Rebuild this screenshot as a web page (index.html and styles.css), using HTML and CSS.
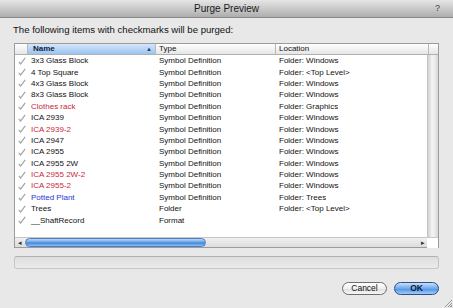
FILE: index.html
```html
<!DOCTYPE html>
<html>
<head>
<meta charset="utf-8">
<link rel="stylesheet" href="styles.css">
</head>
<body>
<div class="window">
  <div class="titlebar">
    <span class="title">Purge Preview</span>
    <span class="help">?</span>
  </div>
  <div class="content">
    <div class="prompt">The following items with checkmarks will be purged:</div>
    <div class="list">
      <div class="header">
        <div class="hcell hcheck"></div>
        <div class="hcell hname">Name<span class="sort">▲</span></div>
        <div class="hcell htype">Type</div>
        <div class="hcell hloc">Location</div>
        <div class="hcell hcorner"></div>
      </div>
      <div class="body">
        <div class="rows">
          <div class="row"><span class="chk"><svg viewBox="0 0 8 8" width="8" height="8"><path d="M0.8 5.2 L2.6 7 L7.2 0.8" fill="none" stroke="#a4a4a4" stroke-width="1.2"/><path d="M1.6 4.6 L2.6 5.8" stroke="#d0d0d0" stroke-width="0.8"/></svg></span><span class="c name">3x3 Glass Block</span><span class="c type">Symbol Definition</span><span class="c loc">Folder: Windows</span></div>
          <div class="row"><span class="chk"><svg viewBox="0 0 8 8" width="8" height="8"><path d="M0.8 5.2 L2.6 7 L7.2 0.8" fill="none" stroke="#a4a4a4" stroke-width="1.2"/><path d="M1.6 4.6 L2.6 5.8" stroke="#d0d0d0" stroke-width="0.8"/></svg></span><span class="c name">4 Top Square</span><span class="c type">Symbol Definition</span><span class="c loc">Folder: &lt;Top Level&gt;</span></div>
          <div class="row"><span class="chk"><svg viewBox="0 0 8 8" width="8" height="8"><path d="M0.8 5.2 L2.6 7 L7.2 0.8" fill="none" stroke="#a4a4a4" stroke-width="1.2"/><path d="M1.6 4.6 L2.6 5.8" stroke="#d0d0d0" stroke-width="0.8"/></svg></span><span class="c name">4x3 Glass Block</span><span class="c type">Symbol Definition</span><span class="c loc">Folder: Windows</span></div>
          <div class="row"><span class="chk"><svg viewBox="0 0 8 8" width="8" height="8"><path d="M0.8 5.2 L2.6 7 L7.2 0.8" fill="none" stroke="#a4a4a4" stroke-width="1.2"/><path d="M1.6 4.6 L2.6 5.8" stroke="#d0d0d0" stroke-width="0.8"/></svg></span><span class="c name">8x3 Glass Block</span><span class="c type">Symbol Definition</span><span class="c loc">Folder: Windows</span></div>
          <div class="row"><span class="chk"><svg viewBox="0 0 8 8" width="8" height="8"><path d="M0.8 5.2 L2.6 7 L7.2 0.8" fill="none" stroke="#a4a4a4" stroke-width="1.2"/><path d="M1.6 4.6 L2.6 5.8" stroke="#d0d0d0" stroke-width="0.8"/></svg></span><span class="c name red">Clothes rack</span><span class="c type">Symbol Definition</span><span class="c loc">Folder: Graphics</span></div>
          <div class="row"><span class="chk"><svg viewBox="0 0 8 8" width="8" height="8"><path d="M0.8 5.2 L2.6 7 L7.2 0.8" fill="none" stroke="#a4a4a4" stroke-width="1.2"/><path d="M1.6 4.6 L2.6 5.8" stroke="#d0d0d0" stroke-width="0.8"/></svg></span><span class="c name">ICA 2939</span><span class="c type">Symbol Definition</span><span class="c loc">Folder: Windows</span></div>
          <div class="row"><span class="chk"><svg viewBox="0 0 8 8" width="8" height="8"><path d="M0.8 5.2 L2.6 7 L7.2 0.8" fill="none" stroke="#a4a4a4" stroke-width="1.2"/><path d="M1.6 4.6 L2.6 5.8" stroke="#d0d0d0" stroke-width="0.8"/></svg></span><span class="c name red">ICA 2939-2</span><span class="c type">Symbol Definition</span><span class="c loc">Folder: Windows</span></div>
          <div class="row"><span class="chk"><svg viewBox="0 0 8 8" width="8" height="8"><path d="M0.8 5.2 L2.6 7 L7.2 0.8" fill="none" stroke="#a4a4a4" stroke-width="1.2"/><path d="M1.6 4.6 L2.6 5.8" stroke="#d0d0d0" stroke-width="0.8"/></svg></span><span class="c name">ICA 2947</span><span class="c type">Symbol Definition</span><span class="c loc">Folder: Windows</span></div>
          <div class="row"><span class="chk"><svg viewBox="0 0 8 8" width="8" height="8"><path d="M0.8 5.2 L2.6 7 L7.2 0.8" fill="none" stroke="#a4a4a4" stroke-width="1.2"/><path d="M1.6 4.6 L2.6 5.8" stroke="#d0d0d0" stroke-width="0.8"/></svg></span><span class="c name">ICA 2955</span><span class="c type">Symbol Definition</span><span class="c loc">Folder: Windows</span></div>
          <div class="row"><span class="chk"><svg viewBox="0 0 8 8" width="8" height="8"><path d="M0.8 5.2 L2.6 7 L7.2 0.8" fill="none" stroke="#a4a4a4" stroke-width="1.2"/><path d="M1.6 4.6 L2.6 5.8" stroke="#d0d0d0" stroke-width="0.8"/></svg></span><span class="c name">ICA 2955 2W</span><span class="c type">Symbol Definition</span><span class="c loc">Folder: Windows</span></div>
          <div class="row"><span class="chk"><svg viewBox="0 0 8 8" width="8" height="8"><path d="M0.8 5.2 L2.6 7 L7.2 0.8" fill="none" stroke="#a4a4a4" stroke-width="1.2"/><path d="M1.6 4.6 L2.6 5.8" stroke="#d0d0d0" stroke-width="0.8"/></svg></span><span class="c name red">ICA 2955 2W-2</span><span class="c type">Symbol Definition</span><span class="c loc">Folder: Windows</span></div>
          <div class="row"><span class="chk"><svg viewBox="0 0 8 8" width="8" height="8"><path d="M0.8 5.2 L2.6 7 L7.2 0.8" fill="none" stroke="#a4a4a4" stroke-width="1.2"/><path d="M1.6 4.6 L2.6 5.8" stroke="#d0d0d0" stroke-width="0.8"/></svg></span><span class="c name red">ICA 2955-2</span><span class="c type">Symbol Definition</span><span class="c loc">Folder: Windows</span></div>
          <div class="row"><span class="chk"><svg viewBox="0 0 8 8" width="8" height="8"><path d="M0.8 5.2 L2.6 7 L7.2 0.8" fill="none" stroke="#a4a4a4" stroke-width="1.2"/><path d="M1.6 4.6 L2.6 5.8" stroke="#d0d0d0" stroke-width="0.8"/></svg></span><span class="c name blue">Potted Plant</span><span class="c type">Symbol Definition</span><span class="c loc">Folder: Trees</span></div>
          <div class="row"><span class="chk"><svg viewBox="0 0 8 8" width="8" height="8"><path d="M0.8 5.2 L2.6 7 L7.2 0.8" fill="none" stroke="#a4a4a4" stroke-width="1.2"/><path d="M1.6 4.6 L2.6 5.8" stroke="#d0d0d0" stroke-width="0.8"/></svg></span><span class="c name">Trees</span><span class="c type">Folder</span><span class="c loc">Folder: &lt;Top Level&gt;</span></div>
          <div class="row"><span class="chk"><svg viewBox="0 0 8 8" width="8" height="8"><path d="M0.8 5.2 L2.6 7 L7.2 0.8" fill="none" stroke="#a4a4a4" stroke-width="1.2"/><path d="M1.6 4.6 L2.6 5.8" stroke="#d0d0d0" stroke-width="0.8"/></svg></span><span class="c name">__ShaftRecord</span><span class="c type">Format</span><span class="c loc"></span></div>
        </div>
        <div class="vscroll"></div>
      </div>
      <div class="hscroll">
        <span class="arrow left">◂</span>
        <div class="track"><div class="thumb"></div></div>
        <span class="arrow right">▸</span>
        <div class="corner"></div>
      </div>
    </div>
    <div class="progress"></div>
    <div class="buttons">
      <button class="btn cancel">Cancel</button>
      <button class="btn ok">OK</button>
    </div>
  </div>
  <div class="grip"></div>
</div>
</body>
</html>
```
FILE: styles.css
```css
* { box-sizing: border-box; }
html, body { margin: 0; padding: 0; }
body {
  width: 453px;
  height: 308px;
  overflow: hidden;
  font-family: "Liberation Sans", Arial, sans-serif;
  background: #e8e8e8;
}
.window {
  position: relative;
  width: 453px;
  height: 308px;
  display: flex;
  flex-direction: column;
  background: #e8e8e8;
}
.titlebar {
  height: 18px;
  flex: none;
  display: flex;
  align-items: center;
  justify-content: center;
  background: linear-gradient(#e6e6e6, #adadad);
  border-bottom: 1px solid #8a8a8a;
  position: relative;
  font-size: 10px;
  color: #1a1a1a;
}
.help {
  position: absolute;
  right: 13px;
  top: 3px;
  font-size: 9px;
  color: #444;
}
.content {
  flex: 1;
  display: flex;
  flex-direction: column;
  padding: 0 14px 0 14px;
}
.prompt {
  font-size: 9.6px;
  color: #111;
  height: 25px;
  padding-top: 6px;
  margin-left: -1px;
}
.list {
  height: 205px;
  border: 1px solid #9c9c9c;
  background: #fff;
  display: flex;
  flex-direction: column;
}
.header {
  height: 11px;
  flex: none;
  display: flex;
  background: linear-gradient(#ffffff, #e6e6e6);
  border-bottom: 1px solid #b0b0b0;
  font-size: 8px;
  line-height: 10px;
  color: #111;
}
.hcell {
  border-right: 1px solid #b8b8b8;
  padding-left: 3px;
  position: relative;
}
.hcheck { width: 13px; }
.hname {
  width: 128px;
  background: linear-gradient(#d4e6fa, #9cc3ef);
  font-weight: bold;
  color: #11233e;
  padding-left: 5px;
}
.sort {
  position: absolute;
  right: 3px;
  top: 0;
  font-size: 6px;
  color: #2a3f5e;
}
.htype { width: 120px; }
.hloc { width: 153px; }
.hcorner { flex: 1; border-right: none; }
.body {
  flex: 1;
  display: flex;
  min-height: 0;
}
.rows {
  flex: 1;
}
.row {
  height: 11.4px;
  display: flex;
  align-items: center;
  font-size: 8px;
  color: #111;
  white-space: nowrap;
}
.chk {
  width: 13px;
  display: flex;
  justify-content: center;
  padding-left: 1px;
}
.c { overflow: hidden; }
.name { width: 128px; padding-left: 3px; }
.type { width: 120px; padding-left: 3px; }
.loc { padding-left: 3px; }
.red { color: #c8283a; }
.blue { color: #1f35d8; }
.vscroll {
  width: 11px;
  background: linear-gradient(90deg, #d0d0d0, #f4f4f4 40%, #ebebeb 70%, #d6d6d6);
  border-left: 1px solid #c4c4c4;
}
.hscroll {
  height: 10px;
  flex: none;
  display: flex;
  align-items: center;
  border-top: 1px solid #c8c8c8;
  background: linear-gradient(#f0f0f0, #dcdcdc);
}
.arrow {
  font-size: 7px;
  color: #333;
  width: 9px;
  text-align: center;
  line-height: 9px;
}
.track {
  flex: 1;
  height: 9px;
  padding: 0 0 0 1px;
}
.thumb {
  width: 181px;
  height: 9px;
  border-radius: 5px;
  background: linear-gradient(#bad6f5, #6aa4e8 45%, #3f86df 55%, #8cc0f3);
  border: 1px solid #4f7fbf;
}
.corner {
  width: 11px;
  height: 10px;
  background: #fff;
}
.progress {
  margin-top: 8px;
  height: 13px;
  border: 1px solid #c6c6c6;
  border-top-color: #b0b0b0;
  border-radius: 3px;
  background: linear-gradient(#dedede, #ebebeb);
}
.buttons {
  display: flex;
  justify-content: flex-end;
  gap: 7px;
  margin-top: 13px;
}
.btn {
  height: 13px;
  border-radius: 7px;
  font-family: "Liberation Sans", Arial, sans-serif;
  font-size: 8.5px;
  padding: 0;
  line-height: 11px;
  color: #111;
}
.cancel {
  width: 45px;
  border: 1px solid #6e6e6e;
  background: linear-gradient(#ffffff, #f0f0f0 50%, #dedede 51%, #f6f6f6);
}
.ok {
  width: 45px;
  border: 1px solid #2c4e8c;
  background: linear-gradient(#c8e0fa, #6fa8ea 50%, #4b8fe3 51%, #9fcdf7);
  font-weight: bold;
  color: #0c1a33;
}
.grip {
  position: absolute;
  right: 1px;
  bottom: 1px;
  width: 7px;
  height: 7px;
  background: linear-gradient(135deg, transparent 45%, #999 45%, #999 52%, transparent 52%, transparent 65%, #999 65%, #999 72%, transparent 72%, transparent 85%, #999 85%);
}
```
